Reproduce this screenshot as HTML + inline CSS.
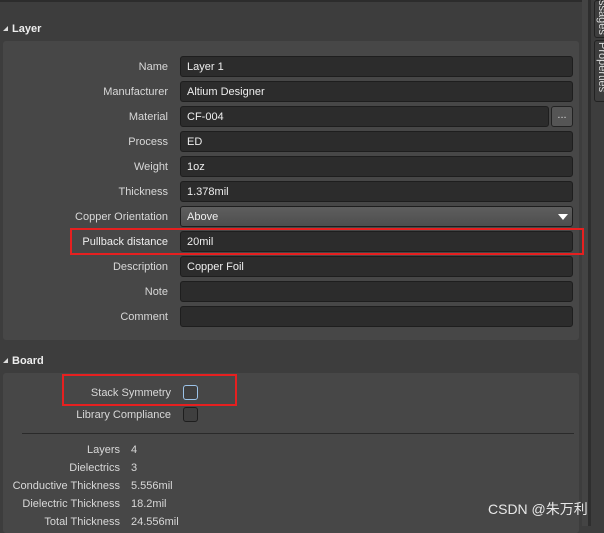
<!DOCTYPE html>
<html><head><style>
body{margin:0;width:604px;height:526px;background:#3d3d3d;font-family:"Liberation Sans","Noto Sans CJK SC",sans-serif;font-size:11px;color:#d8d8d8;position:relative;overflow:hidden}
.a{position:absolute}
.panel{position:absolute;background:#474747;border-radius:3px}
.lbl{position:absolute;text-align:right;width:165px;left:3px;margin-top:1px}
.inp{position:absolute;left:180px;width:393px;height:21px;background:#2c2c2c;border:1px solid #1e1e1e;border-radius:3px;box-sizing:border-box;padding-left:6px;line-height:20px;color:#eee}
.hdr{position:absolute;left:3px;font-weight:bold;color:#eee}
.tri{display:inline-block;width:0;height:0;border-left:5px solid transparent;border-bottom:5px solid #ddd;margin-right:4px;vertical-align:1px}
.red{position:absolute;border:2px solid #e62020;box-sizing:border-box}
.cb{position:absolute;width:15px;height:15px;border:1px solid #1e1e1e;border-radius:3px;background:#3f3f3f;box-sizing:border-box}
.st{position:absolute;text-align:right;width:120px;left:0;margin-top:1px}
</style></head><body>
<div class="a" style="left:0;top:0;width:582px;height:2px;background:#2c2c2c"></div>
<div class="a" style="left:582px;top:0;width:6px;height:526px;background:#444"></div>
<div class="a" style="left:588px;top:0;width:3px;height:526px;background:#2e2e2e"></div>
<div class="a" style="left:594px;top:0;width:12px;height:36px;border:1px solid #222;border-radius:3px;background:#3d3d3d"></div>
<div class="a" style="left:594px;top:40px;width:12px;height:60px;border:1px solid #222;border-radius:3px;background:#3d3d3d"></div>
<div class="a" style="left:596px;top:0;writing-mode:vertical-rl;font-size:11px;color:#ddd">ssages</div>
<div class="a" style="left:596px;top:42px;writing-mode:vertical-rl;font-size:11px;color:#ddd">Properties</div>

<div class="hdr" style="top:23px"><span class="tri"></span>Layer</div>
<div class="panel" style="left:3px;top:41px;width:576px;height:299px"></div>
<div class="lbl" style="top:60px">Name</div><div class="inp" style="top:56px">Layer 1</div>
<div class="lbl" style="top:85px">Manufacturer</div><div class="inp" style="top:81px">Altium Designer</div>
<div class="lbl" style="top:110px">Material</div><div class="inp" style="top:106px;width:369px">CF-004</div>
<div class="a" style="left:551px;top:106px;width:22px;height:21px;background:#555;border:1px solid #222;border-radius:3px;box-sizing:border-box;text-align:center;line-height:17px">...</div>
<div class="lbl" style="top:135px">Process</div><div class="inp" style="top:131px">ED</div>
<div class="lbl" style="top:160px">Weight</div><div class="inp" style="top:156px">1oz</div>
<div class="lbl" style="top:185px">Thickness</div><div class="inp" style="top:181px">1.378mil</div>
<div class="lbl" style="top:210px">Copper Orientation</div><div class="inp" style="top:206px;background:linear-gradient(#5e5e5e,#4e4e4e)">Above</div>
<div class="a" style="left:558px;top:214px;width:0;height:0;border-left:5px solid transparent;border-right:5px solid transparent;border-top:6px solid #fff"></div>
<div class="lbl" style="top:235px;color:#eee">Pullback distance</div><div class="inp" style="top:231px">20mil</div>
<div class="red" style="left:70px;top:228px;width:514px;height:27px"></div>
<div class="lbl" style="top:260px">Description</div><div class="inp" style="top:256px">Copper Foil</div>
<div class="lbl" style="top:285px">Note</div><div class="inp" style="top:281px"></div>
<div class="lbl" style="top:310px">Comment</div><div class="inp" style="top:306px"></div>

<div class="hdr" style="top:355px"><span class="tri"></span>Board</div>
<div class="panel" style="left:3px;top:373px;width:576px;height:160px"></div>
<div class="a" style="left:0;top:387px;width:171px;text-align:right">Stack Symmetry</div>
<div class="cb" style="left:183px;top:385px;border-color:#9cc3e8"></div>
<div class="a" style="left:0;top:409px;width:171px;text-align:right">Library Compliance</div>
<div class="cb" style="left:183px;top:407px"></div>
<div class="red" style="left:62px;top:374px;width:175px;height:32px"></div>
<div class="a" style="left:22px;top:433px;width:552px;height:1px;background:#2a2a2a"></div>
<div class="st" style="top:443px">Layers</div><div class="a" style="left:131px;top:444px">4</div>
<div class="st" style="top:461px">Dielectrics</div><div class="a" style="left:131px;top:462px">3</div>
<div class="st" style="top:479px">Conductive Thickness</div><div class="a" style="left:131px;top:480px">5.556mil</div>
<div class="st" style="top:497px">Dielectric Thickness</div><div class="a" style="left:131px;top:498px">18.2mil</div>
<div class="st" style="top:515px">Total Thickness</div><div class="a" style="left:131px;top:516px">24.556mil</div>
<div class="a" style="left:488px;top:499px;font-size:14px;color:#e8e8e8">CSDN @朱万利</div>
</body></html>
